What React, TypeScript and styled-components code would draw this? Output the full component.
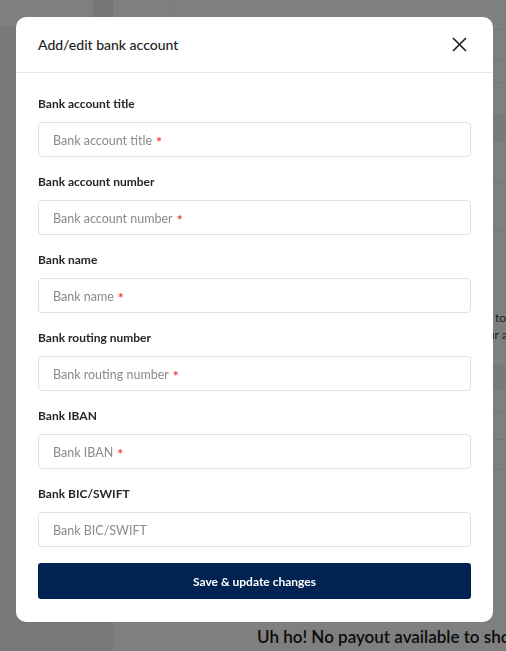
import React from "react";
import styled, { createGlobalStyle } from "styled-components";

const Global = createGlobalStyle`
  html, body { margin: 0; padding: 0; }
  body {
    font-family: Lato, "Noto Sans", sans-serif;
    background: #ffffff;
    overflow: hidden;
  }
  * { box-sizing: border-box; }
`;

const Page = styled.div`
  display: flex;
  width: 506px;
  height: 651px;
  overflow: hidden;
`;

const Sidebar = styled.aside`
  width: 113px;
  flex-shrink: 0;
  display: flex;
  flex-direction: column;
  background: #f1f1f2;
`;

const SidebarTop = styled.div`
  height: 28px;
  display: flex;
  border-bottom: 1px solid #e8e8e8;
`;

const SidebarBrand = styled.div`
  width: 93px;
  background: #ffffff;
`;

const SidebarGap = styled.div`
  flex: 1;
  background: #ececee;
`;

const Main = styled.main`
  flex: 1;
  min-width: 0;
  display: flex;
  flex-direction: column;
  background: #ffffff;
  overflow: hidden;
`;

const TopBar = styled.div`
  height: 30px;
  display: flex;
  border-bottom: 1px solid #f0f0f0;
`;

const TopCell = styled.div<{ $w?: number }>`
  width: ${(p) => (p.$w ? `${p.$w}px` : "auto")};
  flex: ${(p) => (p.$w ? "none" : "1")};
  border-right: 1px solid #f0f0f0;
  font-size: 13px;
  font-weight: 700;
  color: #222;
  padding: 16px 0 0 24px;
`;

const Row = styled.div<{ $h: number; $shade?: boolean }>`
  height: ${(p) => p.$h}px;
  border-bottom: 1px solid #ededed;
  background: ${(p) => (p.$shade ? "#f3f3f3" : "#ffffff")};
  font-size: 12px;
  color: #444;
  display: flex;
  flex-direction: column;
  justify-content: flex-end;
  align-items: flex-start;
  padding: 0 0 22px 382px;
  line-height: 17px;
`;

const NoteLine = styled.span<{ $indent?: number }>`
  white-space: nowrap;
  margin-left: ${(p) => p.$indent ?? 0}px;
`;

const Empty = styled.div`
  flex: 1;
  display: flex;
  align-items: flex-end;
  justify-content: flex-start;
  padding: 0 0 4px 144px;
  font-size: 17px;
  font-weight: 600;
  color: #161616;
  white-space: nowrap;
`;

const Overlay = styled.div`
  position: fixed;
  inset: 0;
  background: rgba(0, 0, 0, 0.5);
`;

const Modal = styled.div`
  position: fixed;
  left: 16px;
  top: 17px;
  width: 477px;
  background: #ffffff;
  border-radius: 10px;
  display: flex;
  flex-direction: column;
`;

const Header = styled.div`
  height: 56px;
  display: flex;
  align-items: center;
  justify-content: space-between;
  padding: 0 26px 0 22px;
  border-bottom: 1px solid #e6e6e6;
`;

const Title = styled.h2`
  margin: 0;
  font-size: 14px;
  font-weight: 500;
  color: #1c1c1c;
`;

const Close = styled.button`
  border: 0;
  background: transparent;
  padding: 0;
  width: 16px;
  height: 16px;
  display: flex;
  align-items: center;
  justify-content: center;
  cursor: pointer;
`;

const Body = styled.form`
  display: flex;
  flex-direction: column;
  padding: 23px 22px 23px;
`;

const Field = styled.div`
  display: flex;
  flex-direction: column;
  gap: 10px;
  margin-bottom: 17px;
`;

const Label = styled.label`
  font-size: 12px;
  font-weight: 700;
  color: #262626;
  line-height: 16px;
`;

const InputBox = styled.div`
  height: 35px;
  border: 1px solid #e0e0e0;
  border-radius: 4px;
  display: flex;
  align-items: center;
  padding: 1px 14px 0;
  font-size: 12.5px;
  color: #8a8a8a;
`;

const Star = styled.span`
  color: #ef3b3b;
  margin-left: 4px;
  font-size: 14px;
  font-weight: 700;
  line-height: 1;
  transform: translateY(2px);
`;

const Button = styled.button`
  margin-top: -1px;
  height: 36px;
  border: 0;
  border-radius: 3px;
  background: #012351;
  color: #ffffff;
  font-family: inherit;
  font-size: 12px;
  font-weight: 700;
  cursor: pointer;
`;

const fields: { label: string; required: boolean }[] = [
  { label: "Bank account title", required: true },
  { label: "Bank account number", required: true },
  { label: "Bank name", required: true },
  { label: "Bank routing number", required: true },
  { label: "Bank IBAN", required: true },
  { label: "Bank BIC/SWIFT", required: false },
];

export default function App() {
  return (
    <>
      <Global />
      <Page>
        <Sidebar>
          <SidebarTop>
            <SidebarBrand />
            <SidebarGap />
          </SidebarTop>
        </Sidebar>
        <Main>
          <TopBar>
            <TopCell $w={58}>Bal</TopCell>
            <TopCell />
          </TopBar>
          <Row $h={30} />
          <Row $h={22} />
          <Row $h={33} />
          <Row $h={25} $shade />
          <Row $h={42} />
          <Row $h={48} />
          <Row $h={135}>
            <NoteLine>to</NoteLine>
            <NoteLine $indent={-20}>your account</NoteLine>
          </Row>
          <Row $h={23} $shade />
          <Row $h={17} />
          <Row $h={28} />
          <Row $h={30} />
          <Empty>Uh ho! No payout available to show</Empty>
        </Main>
      </Page>
      <Overlay />
      <Modal role="dialog" aria-label="Add/edit bank account">
        <Header>
          <Title>Add/edit bank account</Title>
          <Close type="button" aria-label="Close">
            <svg width="15" height="15" viewBox="0 0 15 15" fill="none">
              <path d="M1 1L14 14M14 1L1 14" stroke="#1c1c1c" strokeWidth="1.6" />
            </svg>
          </Close>
        </Header>
        <Body onSubmit={(e) => e.preventDefault()}>
          {fields.map((f) => (
            <Field key={f.label}>
              <Label>{f.label}</Label>
              <InputBox>
                {f.label}
                {f.required && <Star>*</Star>}
              </InputBox>
            </Field>
          ))}
          <Button type="submit">Save &amp; update changes</Button>
        </Body>
      </Modal>
    </>
  );
}
